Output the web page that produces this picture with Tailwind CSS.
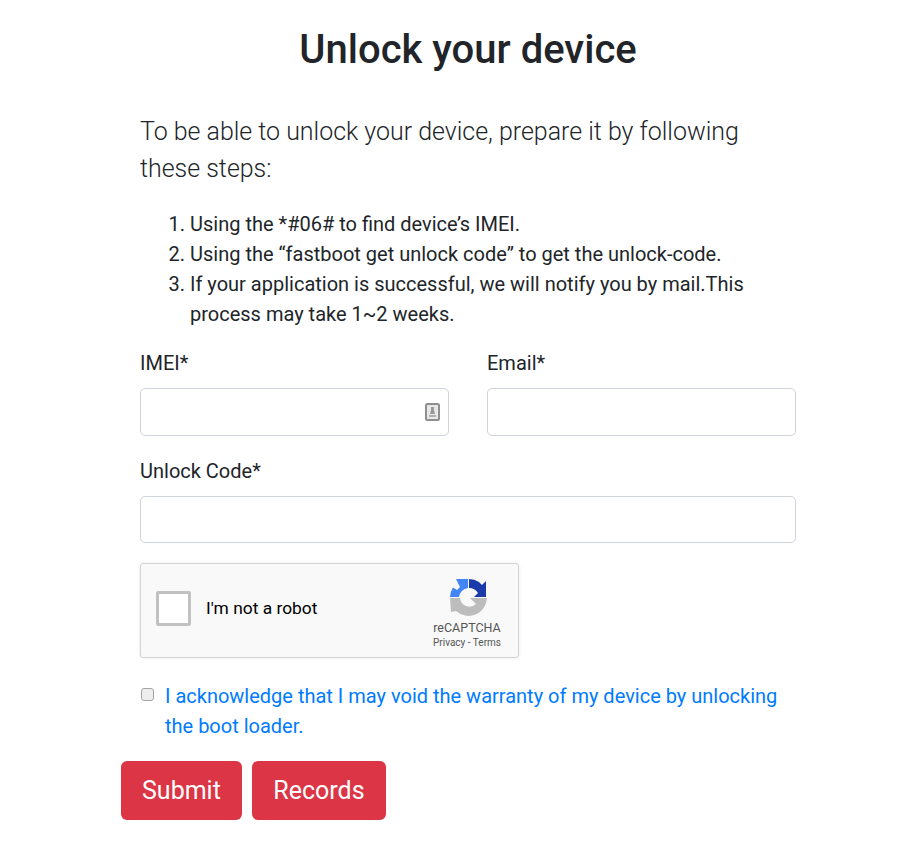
<!DOCTYPE html>
<html lang="en">
<head>
  <meta charset="UTF-8" />
  <title>Unlock your device</title>
  <script src="https://cdn.jsdelivr.net/npm/@tailwindcss/browser@4"></script>
</head>
<body class="bg-white text-[#212529] font-['Roboto',sans-serif] text-[20px] leading-[30px]">

<main class="w-[656px] ml-[140px] pt-[26px]">
  <h1 class="text-[40px] leading-[48px] font-medium text-center">Unlock your device</h1>

  <p class="mt-[39px] text-[24.95px] leading-[37px] font-light">To be able to unlock your device, prepare it by following these steps:</p>

  <ol class="mt-[22px] pl-[50px] list-decimal">
    <li>Using the *#06# to find device’s IMEI.</li>
    <li>Using the “fastboot get unlock code” to get the unlock-code.</li>
    <li>If your application is successful, we will notify you by mail.This process may take 1~2 weeks.</li>
  </ol>

  <!-- Form -->
  <div class="mt-[19px] grid grid-cols-2 gap-x-[38px]">
    <div>
      <label class="block">IMEI*</label>
      <div class="relative mt-[10px]">
        <input type="text" class="block w-full h-[48px] border border-[#ced4da] rounded-[5px] bg-white" />
        <svg class="absolute right-[9px] top-[15px]" width="15" height="18" viewBox="0 0 15 18">
          <rect x="1" y="1" width="13" height="16" rx="1.500" fill="#e8e8e8" stroke="#8f8f8f" stroke-width="2"/>
          <rect x="6" y="4" width="3" height="3" fill="#999"/>
          <path d="M5 11l1-4h3l1 4z" fill="#999"/>
          <rect x="4" y="12" width="7" height="2" fill="#b0b0b0"/>
        </svg>
      </div>
    </div>
    <div>
      <label class="block">Email*</label>
      <input type="email" class="mt-[10px] block w-full h-[48px] border border-[#ced4da] rounded-[5px] bg-white" />
    </div>
  </div>

  <div class="mt-[20px]">
    <label class="block">Unlock Code*</label>
    <input type="text" class="mt-[10px] block w-full h-[47px] border border-[#ced4da] rounded-[5px] bg-white" />
  </div>

  <!-- Captcha -->
  <div class="mt-[20px] w-[379px] h-[95px] flex bg-[#f9f9f9] border border-[#d3d3d3] rounded-[3px] shadow-[0_0_4px_rgba(0,0,0,0.08)]">
    <div class="flex items-center self-stretch pb-[5px]">
      <div class="ml-[15px] w-[35px] h-[35px] bg-white border-[3px] border-[#c1c1c1] rounded-[2px]"></div>
      <span class="ml-[15px] text-[17.4px] leading-[20px] text-black">I'm not a robot</span>
    </div>
    <div class="ml-auto mr-[16px] mt-[14px] self-start w-[70px] flex flex-col items-center">
      <svg class="ml-[4px]" width="40" height="40" viewBox="0 0 40 40">
        <path d="M7 1H19V10A10 10 0 0 0 10 19H1A19 19 0 0 1 4 9.500L8 12L11 9z" fill="#4285f4"/>
        <path d="M20 1A19 19 0 0 1 30 4L33 7L37 3V19H25L29 15A11 11 0 0 0 20 10z" fill="#1c3aa9"/>
        <path d="M1 20H11A9.500 9.500 0 0 0 27 26L21 20H38A18.500 18.500 0 0 1 7 33L2 34z" fill="#bdbdbd"/>
      </svg>
      <div class="mt-[3px] text-[12.5px] leading-[14px] text-[#555]">reCAPTCHA</div>
      <div class="mt-[2px] text-[10px] leading-[12px] text-[#555] whitespace-nowrap">Privacy - Terms</div>
    </div>
  </div>

  <div class="mt-[23px] flex">
    <input type="checkbox" class="mt-[7px] ml-[1px] w-[13px] h-[13px] shrink-0 appearance-none bg-[#eeeeee] border border-[#a3a3a3] rounded-[3px]" />
    <label class="ml-[11px] text-[#007bff]">I acknowledge that I may void the warranty of my device by unlocking the boot loader.</label>
  </div>

  <div class="mt-[20px] -ml-[19px] flex gap-[10px]">
    <button class="h-[59px] px-[21px] bg-[#dc3545] text-white text-[25px] rounded-[6px]">Submit</button>
    <button class="h-[59px] px-[21.5px] bg-[#dc3545] text-white text-[25px] rounded-[6px]">Records</button>
  </div>
</main>

</body>
</html>
